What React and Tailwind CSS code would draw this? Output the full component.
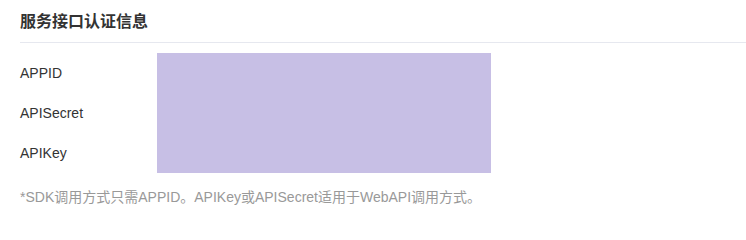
export default function App() {
  return (
    <div
      className="w-[746px] h-[222px] bg-white pl-[20px]"
      style={{ fontFamily: '"Liberation Sans", "Noto Sans CJK SC", sans-serif' }}
    >
      <div className="pt-[12px] pb-[10px] border-b border-[#e6e8ef]">
        <h2 className="text-[16px] leading-[20px] font-bold text-[#333333]">服务接口认证信息</h2>
      </div>
      <div className="mt-[10px] flex">
        <div className="w-[137px] flex flex-col text-[14px] text-[#333333]">
          <div className="h-[40px] flex items-center">APPID</div>
          <div className="h-[40px] flex items-center">APISecret</div>
          <div className="h-[40px] flex items-center">APIKey</div>
        </div>
        <div className="w-[334px] h-[120px] bg-[#c7bfe5]" />
      </div>
      <p className="mt-[14px] text-[14px] leading-[20px] text-[#999999]">
        *SDK调用方式只需APPID。APIKey或APISecret适用于WebAPI调用方式。
      </p>
    </div>
  );
}
